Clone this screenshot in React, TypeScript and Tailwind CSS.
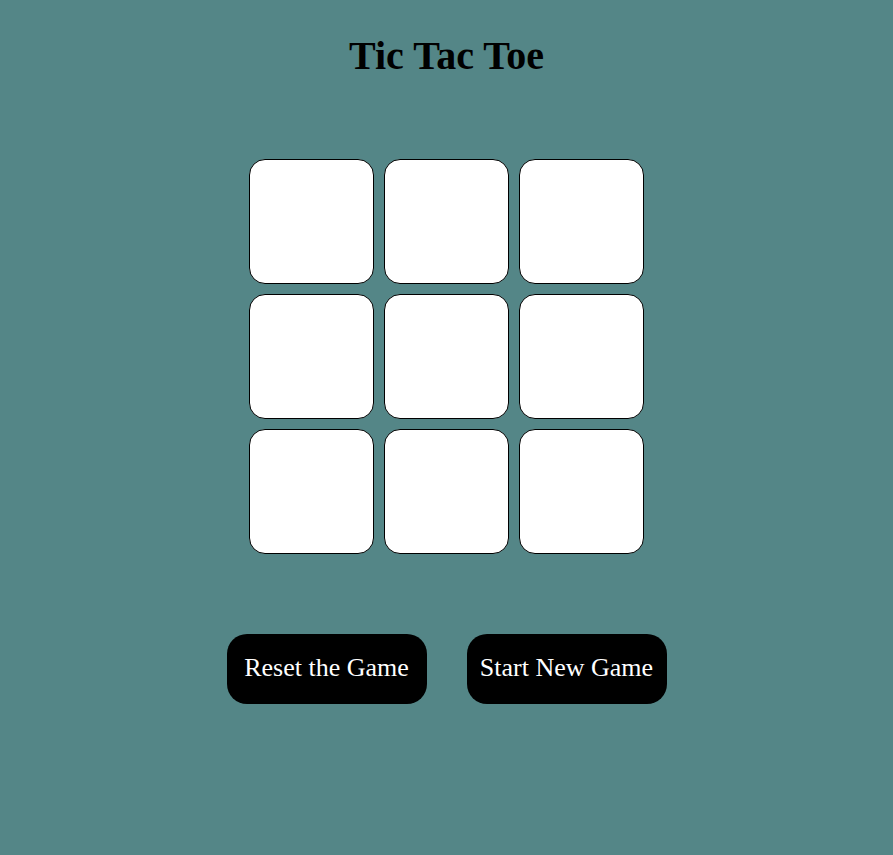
import { useState } from "react";

export default function App() {
  const [cells, setCells] = useState<string[]>(Array(9).fill(""));
  const [turn, setTurn] = useState("X");

  const play = (i: number) => {
    if (cells[i]) return;
    const next = [...cells];
    next[i] = turn;
    setCells(next);
    setTurn(turn === "X" ? "O" : "X");
  };

  const reset = () => {
    setCells(Array(9).fill(""));
    setTurn("X");
  };

  return (
    <div className="min-h-screen bg-[#548687] flex flex-col items-center font-['Liberation_Serif','Times_New_Roman',serif]">
      <h1 className="mt-[33px] text-[40px] leading-[46px] font-bold text-black">Tic Tac Toe</h1>
      <div className="mt-[80px] grid grid-cols-[repeat(3,125px)] gap-[10px]">
        {cells.map((c, i) => (
          <button
            key={i}
            onClick={() => play(i)}
            className="w-[125px] h-[125px] bg-white border border-black rounded-[16px] text-[60px] text-black"
          >
            {c}
          </button>
        ))}
      </div>
      <div className="mt-[80px] flex gap-[40px]">
        <button onClick={reset} className="w-[200px] h-[70px] pb-[3px] rounded-[20px] bg-black text-white text-[26px]">
          Reset the Game
        </button>
        <button onClick={reset} className="w-[200px] h-[70px] pb-[3px] rounded-[20px] bg-black text-white text-[26px]">
          Start New Game
        </button>
      </div>
    </div>
  );
}
